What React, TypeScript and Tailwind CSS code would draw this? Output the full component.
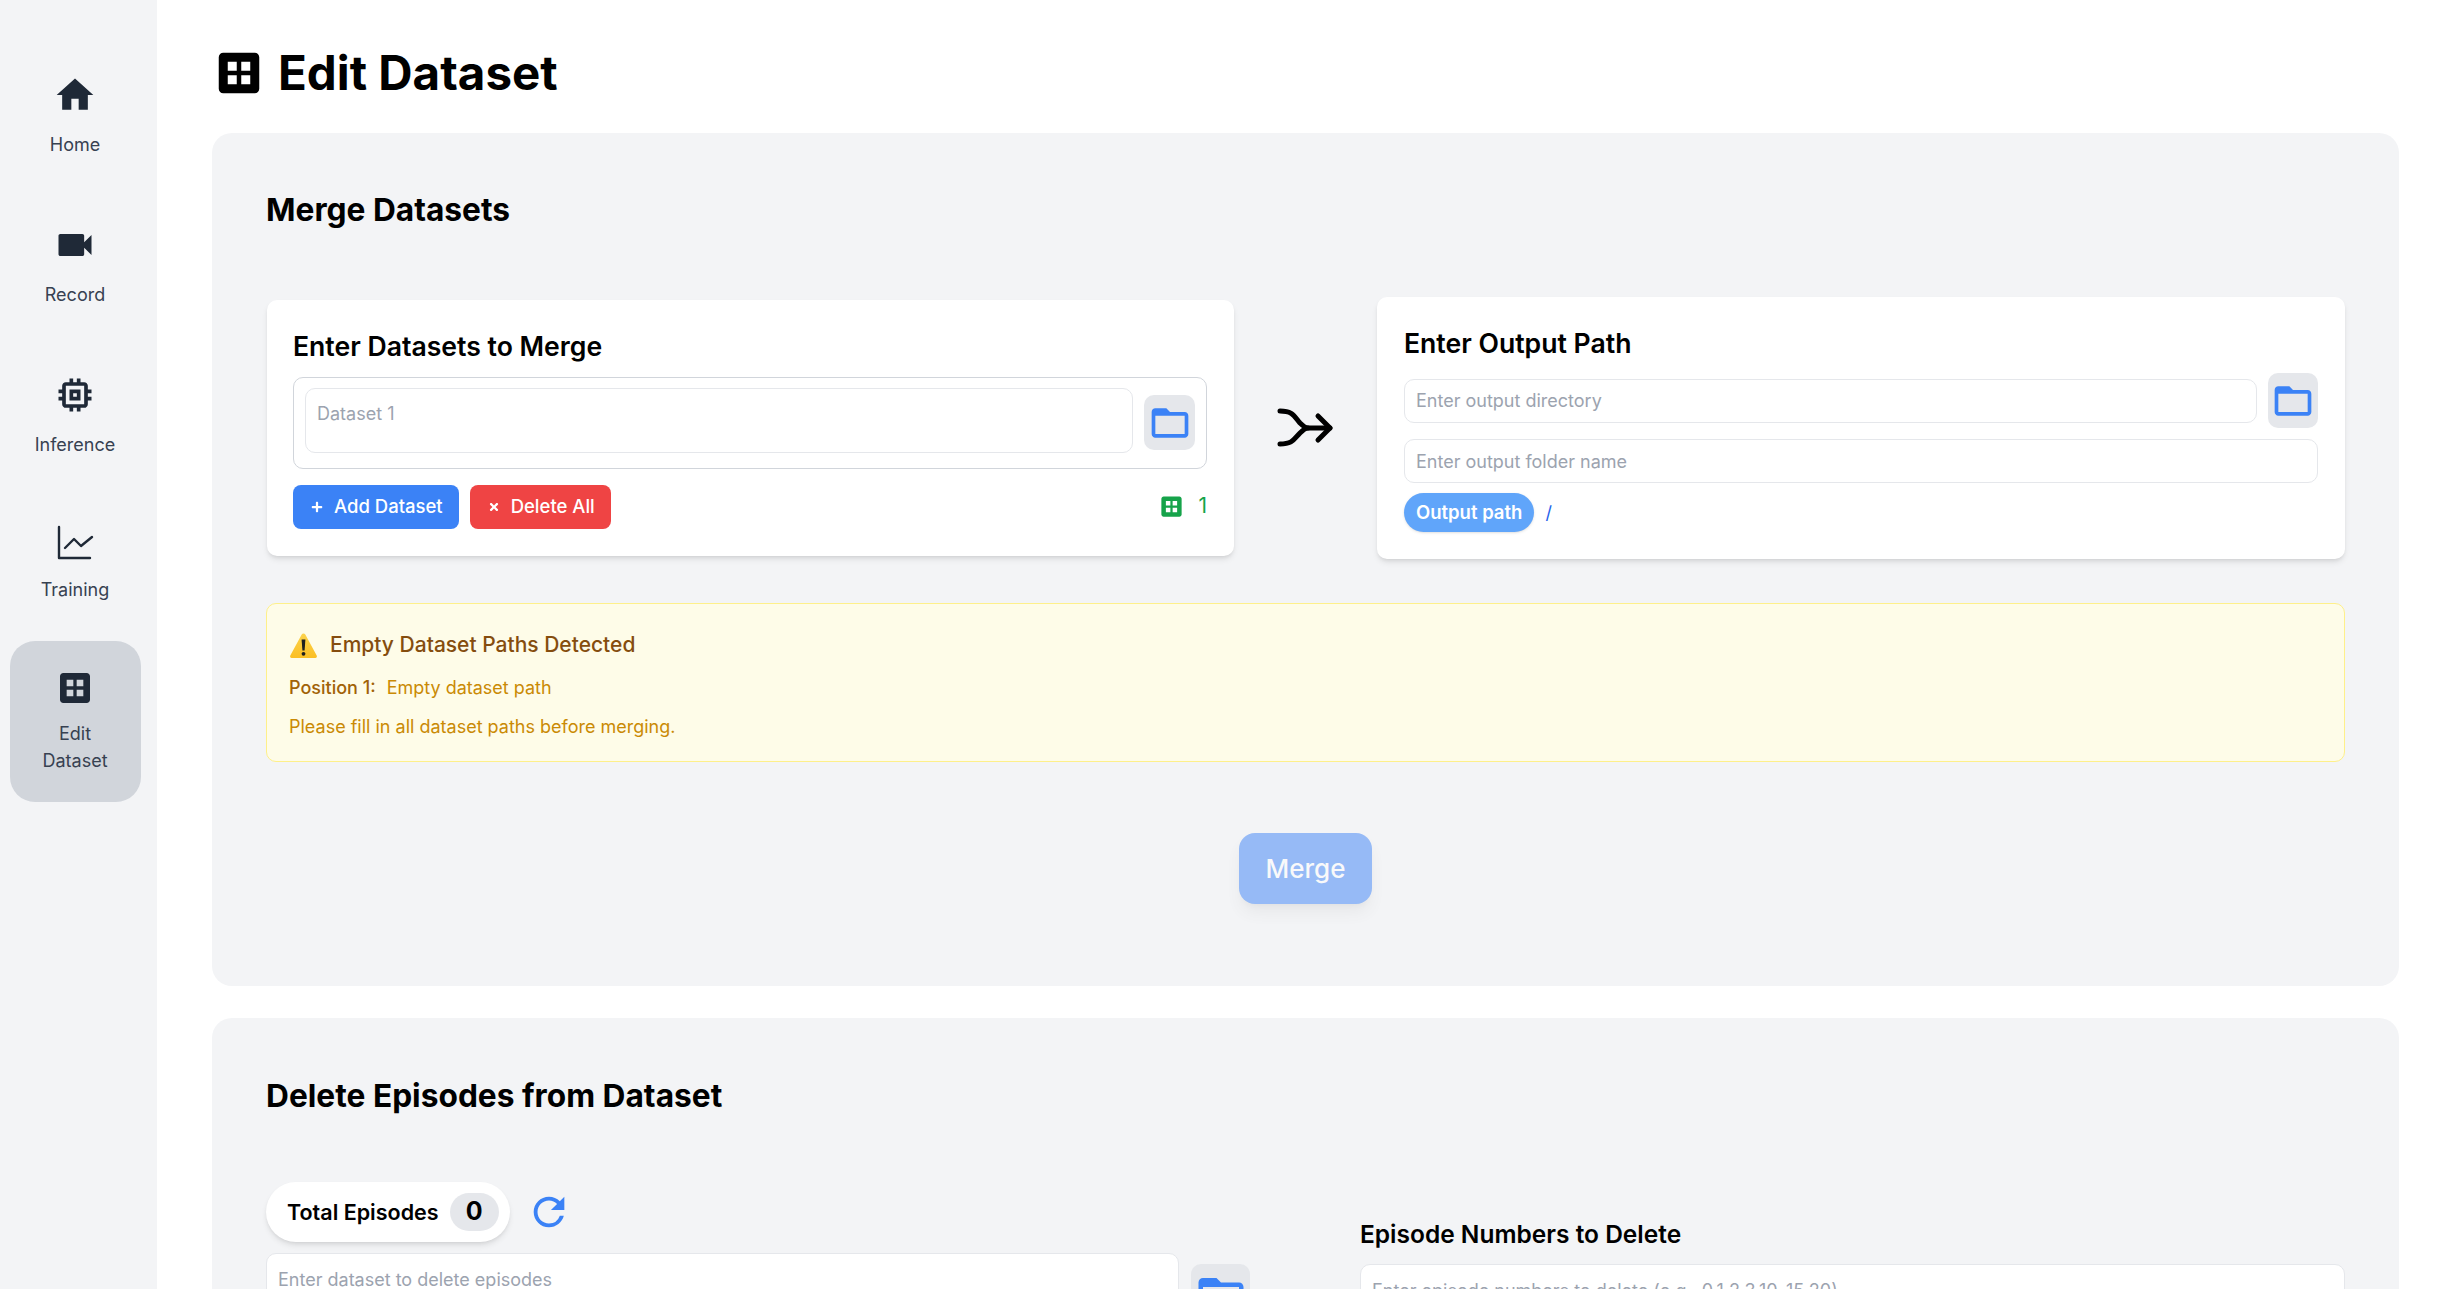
import React from 'react';
import { MdHome, MdVideocam, MdOutlineMemory, MdDataset, MdRefresh } from 'react-icons/md';
import { FaPlus, FaTimes } from 'react-icons/fa';

const FolderIcon = ({ size = 44 }: { size?: number }) => (
  <svg width={size} height={size} viewBox="0 0 24 24" className="text-[#3b82f6] shrink-0">
    <path
      fill="currentColor"
      fillRule="evenodd"
      d="M10 4H4c-1.1 0-2 .9-2 2v12c0 1.1.9 2 2 2h16c1.1 0 2-.9 2-2V8c0-1.1-.9-2-2-2h-8l-2-2zM4 8h16v10H4z"
    />
  </svg>
);

const TrainingIcon = () => (
  <svg width="40" height="40" viewBox="0 0 40 40" fill="none" stroke="#1f2937" strokeWidth="2.4" strokeLinecap="round" strokeLinejoin="round">
    <path d="M4 4v31h31" />
    <path d="M10 25l9-9 7 7 11-9" />
  </svg>
);

const MergeIcon = () => (
  <svg width="62" height="44" viewBox="0 0 62 44" fill="none" stroke="#000" strokeWidth="5" strokeLinecap="round" strokeLinejoin="round">
    <path d="M5 5c13 0 14 5 20 12 3 3 5 5 8 5" />
    <path d="M5 38c13 0 14-5 20-11 3-3 5-5 8-5h22" />
    <path d="M43 10l12 12-12 12" />
  </svg>
);

const WarningIcon = () => (
  <svg width="29" height="27" viewBox="0 0 28 27">
    <defs>
      <linearGradient id="warn" x1="0" y1="0" x2="0" y2="1">
        <stop offset="0" stopColor="#fcd34d" />
        <stop offset="1" stopColor="#fbbf24" />
      </linearGradient>
    </defs>
    <path d="M14 1.500c.8 0 1.400.4 1.800 1.100l11.400 21c.6 1.200-.1 2.400-1.400 2.400H2.200C.9 26 .2 24.800.8 23.600l11.400-21c.4-.7 1-1.100 1.800-1.100z" fill="url(#warn)" />
    <path d="M12.100 7.500h3.800l-.8 11h-2.200z" fill="#1f1f1f" />
    <circle cx="14" cy="21.800" r="1.900" fill="#1f1f1f" />
  </svg>
);

const navItems = [
  { label: 'Home', icon: <MdHome size={44} /> },
  { label: 'Record', icon: <MdVideocam size={44} /> },
  { label: 'Inference', icon: <MdOutlineMemory size={44} /> },
];

const inputClass =
  'bg-white border border-[#e5e7eb] rounded-[10px] px-[11px] text-[18px] text-gray-800 placeholder:text-[#9ca3af] outline-none';

const Sidebar = () => (
  <aside className="w-[157px] shrink-0 bg-[#f3f4f6] flex flex-col items-center pr-[7px] pt-[49px] gap-[16px]">
    {navItems.map((item) => (
      <div key={item.label} className="flex flex-col items-center py-6 text-[#1f2937]">
        <div className="h-11">{item.icon}</div>
        <span className="mt-[14px] text-[18px] leading-7 text-[#374151]">{item.label}</span>
      </div>
    ))}
    <div className="flex flex-col items-center py-6">
      <TrainingIcon />
      <span className="mt-[13px] text-[18px] leading-7 text-[#374151]">Training</span>
    </div>
    <div className="-mt-[3px] w-[131px] h-[161px] bg-[#d1d5db] rounded-[25px] flex flex-col items-center pt-[27px] text-[#1f2937]">
      <MdDataset size={40} />
      <span className="mt-3 text-[18px] leading-[27px] text-[#374151] text-center">
        Edit
        <br />
        Dataset
      </span>
    </div>
  </aside>
);

const MergePanel = () => (
  <section className="bg-[#f3f4f6] rounded-[20px] px-[54px] pt-[58px] pb-[82px]">
    <h2 className="text-[31.700px] leading-[38px] font-bold text-black">Merge Datasets</h2>

    <div className="mt-[68px] ml-px flex items-center">
      {/* Datasets to merge */}
      <div className="flex-1 bg-white rounded-[10px] shadow-md pl-[26px] pr-[27px] pt-[31px] pb-[27px]">
        <h3 className="text-[26.600px] leading-[31px] font-semibold text-black">Enter Datasets to Merge</h3>
        <div className="mt-[15px] border border-[#d1d5db] rounded-[10px] px-[11px] pt-[10px] pb-[15px] flex items-center gap-[11px]">
          <textarea
            rows={1}
            placeholder="Dataset 1"
            className={`${inputClass} flex-1 h-[65px] resize-none pt-[12px] leading-[25px]`}
          />
          <button className="w-[51px] h-[55px] mt-1 bg-[#e5e7eb] rounded-[10px] flex items-center justify-center">
            <FolderIcon />
          </button>
        </div>
        <div className="mt-4 flex items-center gap-[11px]">
          <button className="h-11 bg-[#3b82f6] text-white rounded-[8px] pl-[18px] pr-4 flex items-center gap-[11px] text-[18.500px] font-medium">
            <FaPlus size={12} />
            Add Dataset
          </button>
          <button className="h-11 bg-[#ef4444] text-white rounded-[8px] pl-[18px] pr-4 flex items-center gap-[11px] text-[18.500px] font-medium">
            <FaTimes size={12} />
            Delete All
          </button>
          <div className="ml-auto flex items-center gap-[13px] text-[#16a34a] text-[21px] -mt-0.5">
            <MdDataset size={27} />
            <span>1</span>
          </div>
        </div>
      </div>

      <div className="w-[143px] shrink-0 flex justify-center">
        <MergeIcon />
      </div>

      {/* Output path */}
      <div className="flex-1 bg-white rounded-[10px] shadow-md px-[27px] pt-[31px] pb-[27px]">
        <h3 className="text-[26.600px] leading-[31px] font-semibold text-black">Enter Output Path</h3>
        <div className="mt-[14px] flex items-center gap-[11px]">
          <input placeholder="Enter output directory" className={`${inputClass} flex-1 h-11`} />
          <button className="w-[50px] h-[55px] bg-[#e5e7eb] rounded-[10px] flex items-center justify-center">
            <FolderIcon />
          </button>
        </div>
        <input placeholder="Enter output folder name" className={`${inputClass} w-full h-11 mt-[11px] block`} />
        <div className="mt-[10px] flex items-center gap-[11px]">
          <span className="h-[39px] px-[12px] bg-[#60a5fa] text-white rounded-full flex items-center text-[18.500px] font-semibold shadow-sm">
            Output path
          </span>
          <span className="text-[18px] text-[#2563eb]">/</span>
        </div>
      </div>
    </div>

    {/* Validation warning */}
    <div className="mt-[44px] bg-[#fefce8] border border-[#fef08a] rounded-[10px] px-[22px] pt-[27px] pb-[22px]">
      <div className="flex items-center gap-[12px] text-[21px] leading-7 font-medium text-[#854d0e]">
        <WarningIcon />
        Empty Dataset Paths Detected
      </div>
      <p className="mt-4 text-[18px] leading-[25px] text-[#ca8a04]">
        <span className="font-medium text-[#a16207]">Position 1:</span>
        <span className="ml-[11px]">Empty dataset path</span>
      </p>
      <p className="mt-[14px] text-[18px] leading-[25px] text-[#ca8a04]">Please fill in all dataset paths before merging.</p>
    </div>

    <div className="mt-[71px] flex justify-center">
      <button className="w-[133px] h-[71px] bg-[#3b82f6] text-white text-[26px] font-medium rounded-[16px] shadow-lg opacity-50">
        Merge
      </button>
    </div>
  </section>
);

const DeletePanel = () => (
  <section className="mt-[32px] bg-[#f3f4f6] rounded-[20px] px-[54px] pt-[59px] pb-[81px]">
    <h2 className="text-[31.700px] leading-[38px] font-bold text-black">Delete Episodes from Dataset</h2>

    <div className="mt-[67px] grid grid-cols-[984px_1fr] gap-[110px]">
      <div>
        <div className="flex items-center gap-[16px]">
          <div className="h-[60px] bg-white rounded-full shadow-md pl-[21px] pr-[11px] flex items-center gap-[11px]">
            <span className="text-[21.500px] font-semibold text-black">Total Episodes</span>
            <span className="w-[49px] h-[38px] bg-[#e5e7eb] rounded-full flex items-center justify-center text-[25px] font-bold text-black">
              0
            </span>
          </div>
          <MdRefresh size={46} className="text-[#3b82f6]" />
        </div>
        <div className="mt-[11px] flex items-start gap-[12px]">
          <input placeholder="Enter dataset to delete episodes" className={`${inputClass} flex-1 h-[52px] border-[#d1d5db]`} />
          <button className="w-[59px] h-[64px] mt-[11px] bg-[#e5e7eb] rounded-[10px] flex items-center justify-center">
            <FolderIcon size={54} />
          </button>
        </div>
      </div>
      <div className="pt-[37px]">
        <h3 className="text-[24.500px] leading-[31px] font-semibold text-black">Episode Numbers to Delete</h3>
        <input
          placeholder="Enter episode numbers to delete (e.g., 0,1,2,3,10-15,20)"
          className={`${inputClass} w-full h-[52px] mt-[14px]`}
        />
      </div>
    </div>
  </section>
);

export default function App() {
  return (
    <div className="h-screen flex overflow-hidden bg-white font-['Inter',sans-serif]">
      <Sidebar />
      <main className="flex-1 min-w-0 pl-[55px] pr-[48px] pt-[46px]">
        <h1 className="flex items-center gap-3 h-[54px] text-[47.500px] font-bold text-black">
          <MdDataset size={54} />
          Edit Dataset
        </h1>
        <div className="mt-[33px]">
          <MergePanel />
          <DeletePanel />
        </div>
      </main>
    </div>
  );
}
